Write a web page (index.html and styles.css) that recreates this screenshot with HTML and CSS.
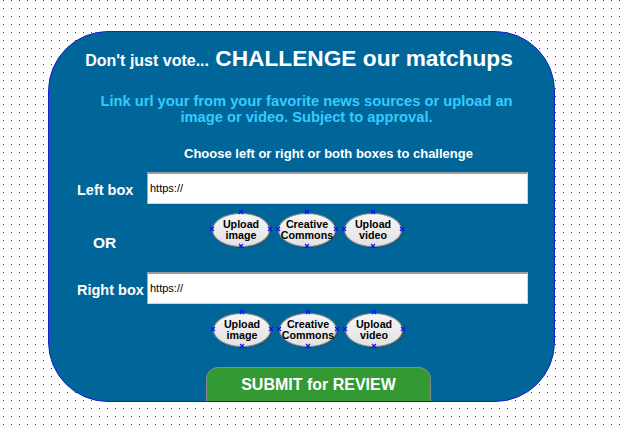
FILE: index.html
```html
<!DOCTYPE html>
<html>
<head>
<meta charset="utf-8">
<link rel="stylesheet" href="styles.css">
</head>
<body>
<div class="panel">
  <h1 class="title"><span class="small">Don't just vote...</span> CHALLENGE our matchups</h1>
  <p class="sub">Link url your from your favorite news sources or upload an<br>image or video. Subject to approval.</p>
  <p class="choose">Choose left or right or both boxes to challenge</p>

  <div class="row row-input first">
    <label class="label">Left box</label>
    <input class="url" type="text" value="https://">
  </div>
  <div class="row row-btns">
    <span class="or">OR</span>
    <div class="ovals">
      <div class="oval">Upload<br>image<svg class="handles" viewBox="0 0 58 34"><path d="M27 -2L31 2M31 -2L27 2M27 32L31 36M31 32L27 36M-2 15L2 19M2 15L-2 19M56 15L60 19M60 15L56 19"/></svg></div>
      <div class="oval">Creative<br>Commons<svg class="handles" viewBox="0 0 58 34"><path d="M27 -2L31 2M31 -2L27 2M27 32L31 36M31 32L27 36M-2 15L2 19M2 15L-2 19M56 15L60 19M60 15L56 19"/></svg></div>
      <div class="oval">Upload<br>video<svg class="handles" viewBox="0 0 58 34"><path d="M27 -2L31 2M31 -2L27 2M27 32L31 36M31 32L27 36M-2 15L2 19M2 15L-2 19M56 15L60 19M60 15L56 19"/></svg></div>
    </div>
  </div>

  <div class="row row-input second">
    <label class="label">Right box</label>
    <input class="url" type="text" value="https://">
  </div>
  <div class="row row-btns last">
    <span class="or"></span>
    <div class="ovals shift">
      <div class="oval">Upload<br>image<svg class="handles" viewBox="0 0 58 34"><path d="M27 -2L31 2M31 -2L27 2M27 32L31 36M31 32L27 36M-2 15L2 19M2 15L-2 19M56 15L60 19M60 15L56 19"/></svg></div>
      <div class="oval">Creative<br>Commons<svg class="handles" viewBox="0 0 58 34"><path d="M27 -2L31 2M31 -2L27 2M27 32L31 36M31 32L27 36M-2 15L2 19M2 15L-2 19M56 15L60 19M60 15L56 19"/></svg></div>
      <div class="oval">Upload<br>video<svg class="handles" viewBox="0 0 58 34"><path d="M27 -2L31 2M31 -2L27 2M27 32L31 36M31 32L27 36M-2 15L2 19M2 15L-2 19M56 15L60 19M60 15L56 19"/></svg></div>
    </div>
  </div>

  <button class="submit" type="button">SUBMIT for REVIEW</button>
</div>
</body>
</html>
```

FILE: styles.css
```css
html, body {
  margin: 0;
  padding: 0;
}
body {
  width: 622px;
  height: 429px;
  overflow: hidden;
  background-color: #ffffff;
  background-image: radial-gradient(circle at 3.5px 0.5px, #2a2aff 0.45px, rgba(42,42,255,0) 0.85px);
  background-size: 8px 8px;
  font-family: "Liberation Sans", Arial, sans-serif;
  padding-top: 31px;
  box-sizing: border-box;
}
.panel {
  box-sizing: border-box;
  margin-left: 48px;
  width: 507px;
  height: 371px;
  background: #006699;
  border: 1px solid #1c1cd4;
  border-radius: 60px;
  overflow: hidden;
  display: flex;
  flex-direction: column;
  padding-top: 13px;
}
.title {
  margin: 0;
  padding-right: 5px;
  text-align: center;
  color: #ffffff;
  font-weight: bold;
  font-size: 22.7px;
  line-height: 26px;
}
.title .small {
  font-size: 16px;
  line-height: 1;
}
.sub {
  margin: 22px 0 0 0;
  padding: 0 0 0 10px;
  text-align: center;
  color: #33ccff;
  font-weight: bold;
  font-size: 14.7px;
  line-height: 16.3px;
  white-space: nowrap;
}
.choose {
  margin: 20px 0 0 0;
  padding-left: 54px;
  text-align: center;
  color: #ffffff;
  font-weight: bold;
  font-size: 13px;
  line-height: 15px;
}
.row {
  display: flex;
  padding-left: 28px;
}
.row-input {
  align-items: center;
  height: 32px;
}
.row-input.first {
  margin-top: 11px;
}
.row-input.second {
  margin-top: 20px;
}
.label {
  width: 70px;
  flex: none;
  color: #ffffff;
  font-weight: bold;
  font-size: 14.5px;
  line-height: 17px;
  padding-top: 5px;
  white-space: nowrap;
}
.url {
  box-sizing: border-box;
  width: 381px;
  height: 32px;
  margin: 0;
  padding: 0 0 0 2px;
  background: #ffffff;
  border-style: solid;
  border-width: 2px 1px 1px 1px;
  border-color: #9c9c9c #d4d4d4 #d4d4d4 #a8a8a8;
  font-family: "Liberation Sans", Arial, sans-serif;
  font-size: 11px;
  color: #000000;
  outline: none;
}
.row-btns {
  margin-top: 9px;
  align-items: flex-start;
}
.or {
  width: 70px;
  flex: none;
  box-sizing: border-box;
  padding: 21px 0 0 16px;
  color: #ffffff;
  font-weight: bold;
  font-size: 15.5px;
  line-height: 18px;
}
.ovals {
  display: flex;
  gap: 8px;
  margin-left: 65px;
}
.ovals.shift {
  margin-left: 66px;
}
.oval {
  position: relative;
  box-sizing: border-box;
  width: 58px;
  height: 34px;
  border-radius: 50%;
  border: 1.5px solid #8e8e8e;
  background: linear-gradient(#f6f6f6, #e2e2e2);
  box-shadow: 1px 1px 1px rgba(60, 60, 60, 0.55);
  display: flex;
  align-items: center;
  justify-content: center;
  text-align: center;
  color: #000000;
  font-weight: bold;
  font-size: 10.7px;
  line-height: 11.5px;
  padding-top: 1px;
}
.handles {
  position: absolute;
  left: -1.5px;
  top: -1.5px;
  width: 58px;
  height: 34px;
  overflow: visible;
  fill: none;
  stroke: #1010ff;
  stroke-width: 1.2;
}
.submit {
  align-self: flex-start;
  margin: 20px 0 0 157px;
  flex: none;
  box-sizing: border-box;
  width: 225px;
  height: 44px;
  padding: 8px 0 0 0;
  display: flex;
  justify-content: center;
  align-items: flex-start;
  background: #339933;
  border: 1px solid #8a8a8a;
  border-radius: 12px 12px 0 0;
  color: #ffffff;
  font-family: "Liberation Sans", Arial, sans-serif;
  font-weight: bold;
  font-size: 16px;
  line-height: 18px;
}
```
